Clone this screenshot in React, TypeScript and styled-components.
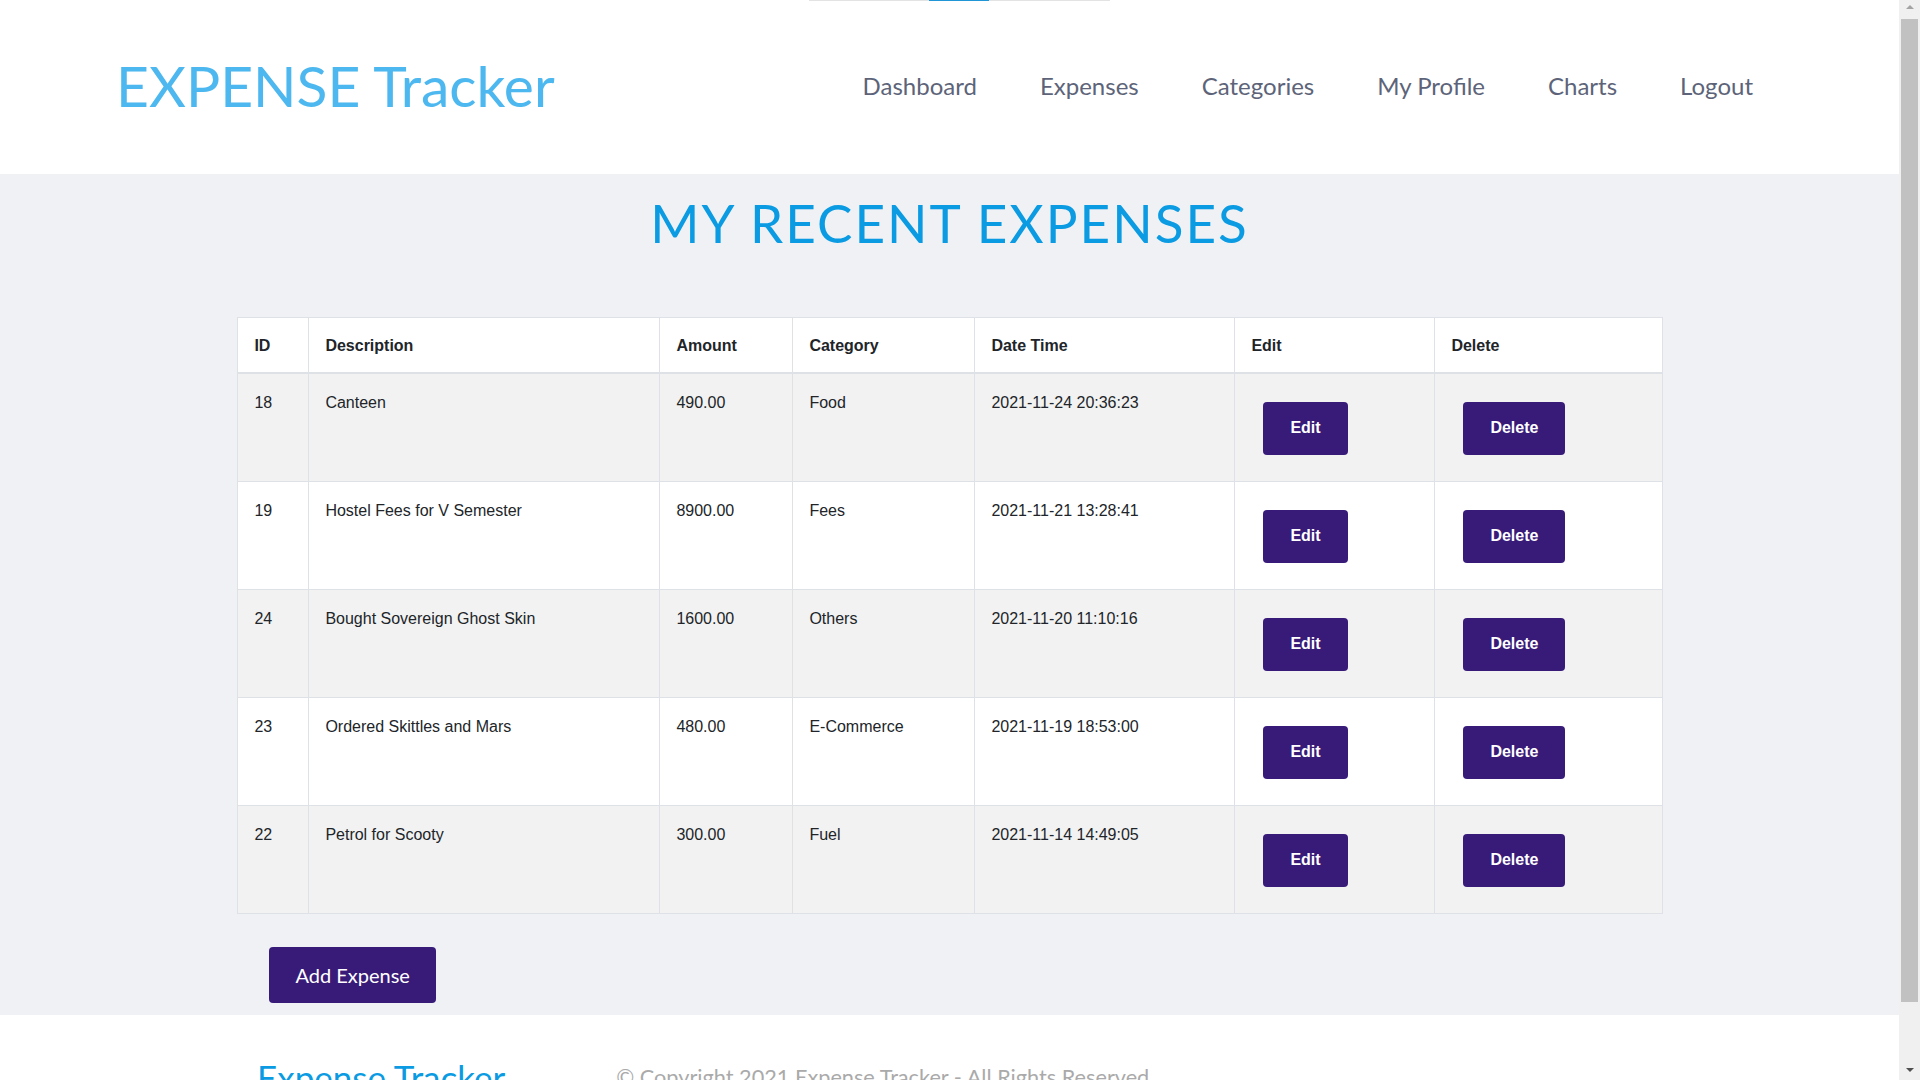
import React from 'react';
import styled, { createGlobalStyle } from 'styled-components';

interface Expense {
  id: number;
  description: string;
  amount: string;
  category: string;
  dateTime: string;
}

const expenses: Expense[] = [
  { id: 18, description: 'Canteen', amount: '490.00', category: 'Food', dateTime: '2021-11-24 20:36:23' },
  { id: 19, description: 'Hostel Fees for V Semester', amount: '8900.00', category: 'Fees', dateTime: '2021-11-21 13:28:41' },
  { id: 24, description: 'Bought Sovereign Ghost Skin', amount: '1600.00', category: 'Others', dateTime: '2021-11-20 11:10:16' },
  { id: 23, description: 'Ordered Skittles and Mars', amount: '480.00', category: 'E-Commerce', dateTime: '2021-11-19 18:53:00' },
  { id: 22, description: 'Petrol for Scooty', amount: '300.00', category: 'Fuel', dateTime: '2021-11-14 14:49:05' },
];

const navLinks = ['Dashboard', 'Expenses', 'Categories', 'My Profile', 'Charts', 'Logout'];

// column widths taken from the table borders
const columns = [
  { label: 'ID', width: 71 },
  { label: 'Description', width: 351 },
  { label: 'Amount', width: 133 },
  { label: 'Category', width: 182 },
  { label: 'Date Time', width: 260 },
  { label: 'Edit', width: 200 },
  { label: 'Delete', width: 228 },
];

const App: React.FC = () => {
  return (
    <>
      <GlobalStyle />
      <Page>
        <Header>
          <LoadBar>
            <LoadBarFill />
          </LoadBar>
          <Logo>EXPENSE Tracker</Logo>
          <Nav>
            {navLinks.map((link) => (
              <NavLink key={link} href="#">
                {link}
              </NavLink>
            ))}
          </Nav>
        </Header>

        <Main>
          <Title>MY RECENT EXPENSES</Title>
          <TableWrap>
            <Table>
              <colgroup>
                {columns.map((col) => (
                  <Col key={col.label} $width={col.width} />
                ))}
              </colgroup>
              <thead>
                <tr>
                  {columns.map((col) => (
                    <Th key={col.label}>{col.label}</Th>
                  ))}
                </tr>
              </thead>
              <tbody>
                {expenses.map((expense) => (
                  <Row key={expense.id}>
                    <Td>{expense.id}</Td>
                    <Td>{expense.description}</Td>
                    <Td>{expense.amount}</Td>
                    <Td>{expense.category}</Td>
                    <Td>{expense.dateTime}</Td>
                    <Td>
                      <ActionButton type="button">Edit</ActionButton>
                    </Td>
                    <Td>
                      <ActionButton type="button">Delete</ActionButton>
                    </Td>
                  </Row>
                ))}
              </tbody>
            </Table>
            <AddButton type="button">Add Expense</AddButton>
          </TableWrap>
        </Main>

        <Footer>
          <FooterBrand>Expense Tracker</FooterBrand>
          <Copyright>© Copyright 2021 Expense Tracker - All Rights Reserved</Copyright>
        </Footer>
      </Page>

      {/* browser scrollbar as seen in the screenshot */}
      <ScrollTrack>
        <ScrollArrow $dir="up" />
        <ScrollThumb />
        <ScrollArrow $dir="down" />
      </ScrollTrack>
    </>
  );
};

export default App;

const GlobalStyle = createGlobalStyle`
  *, *::before, *::after {
    box-sizing: border-box;
  }

  html {
    background: #ffffff;
    scrollbar-width: none;
  }

  html::-webkit-scrollbar {
    display: none;
  }

  body {
    margin: 0;
    font-family: Lato, "Open Sans", sans-serif;
    background: #ffffff;
  }
`;

const Page = styled.div`
  width: calc(100% - 21px);
`;

const Header = styled.header`
  position: relative;
  display: flex;
  align-items: center;
  justify-content: space-between;
  height: 174px;
  padding: 0 146px 4px 116px;
  background: #ffffff;
`;

const LoadBar = styled.div`
  position: absolute;
  top: 0;
  left: 809px;
  width: 301px;
  height: 1px;
  background: #e3e3e3;
`;

const LoadBarFill = styled.div`
  margin-left: 120px;
  width: 60px;
  height: 100%;
  background: #2196d6;
`;

const Logo = styled.div`
  font-family: Lato, sans-serif;
  font-size: 57px;
  font-weight: 400;
  color: #4db8ef;
  line-height: 1.2;
`;

const Nav = styled.nav`
  display: flex;
  align-items: center;
  gap: 63px;
`;

const NavLink = styled.a`
  font-family: Lato, sans-serif;
  font-size: 24px;
  color: #5d6479;
  text-decoration: none;
`;

const Main = styled.main`
  background: #f0f1f5;
  padding: 17px 0 12px;
`;

const Title = styled.h1`
  margin: 0 0 62px;
  text-align: center;
  font-family: Lato, sans-serif;
  font-size: 53px;
  font-weight: 400;
  line-height: 1.2;
  letter-spacing: 2px;
  color: #0a9be3;
`;

const TableWrap = styled.div`
  width: 75%;
  margin: 0 auto;
`;

const Table = styled.table`
  width: 100%;
  table-layout: fixed;
  border-collapse: collapse;
  background: #ffffff;
  border: 1px solid #dee2e6;
  font-family: "Liberation Sans", Arial, sans-serif;
  font-size: 16px;
  line-height: 24px;
  color: #212529;
`;

const Col = styled.col<{ $width: number }>`
  width: ${(props) => props.$width}px;
`;

const Th = styled.th`
  padding: 16px 16px 14px;
  text-align: left;
  font-weight: 700;
  border: 1px solid #dee2e6;
  border-bottom: 2px solid #dee2e6;
`;

const Row = styled.tr`
  &:nth-of-type(odd) {
    background: #f2f2f2;
  }
`;

const Td = styled.td`
  padding: 17px 16px 13px;
  vertical-align: top;
  border: 1px solid #dee2e6;
`;

const ActionButton = styled.button`
  display: inline-flex;
  align-items: center;
  vertical-align: top;
  height: 53px;
  margin: 11px 12px 13px;
  padding: 0 27px;
  border: none;
  border-radius: 4px;
  background: #381a79;
  color: #ffffff;
  font-family: "Liberation Sans", Arial, sans-serif;
  font-size: 16px;
  font-weight: 700;
  cursor: pointer;
`;

const AddButton = styled.button`
  display: block;
  height: 56px;
  margin: 33px 0 0 32px;
  padding: 0 26px;
  border: none;
  border-radius: 4px;
  background: #381a79;
  color: #ffffff;
  font-family: Lato, sans-serif;
  font-size: 20px;
  cursor: pointer;
`;

const Footer = styled.footer`
  display: flex;
  align-items: center;
  gap: 111px;
  padding: 41px 0 47px 257px;
  background: #ffffff;
`;

const FooterBrand = styled.div`
  font-family: Lato, sans-serif;
  font-size: 35px;
  line-height: 1.2;
  color: #0a9be3;
`;

const Copyright = styled.div`
  font-family: Lato, sans-serif;
  font-size: 21.7px;
  color: #aaaaaa;
`;

const ScrollTrack = styled.div`
  position: fixed;
  top: 0;
  right: 0;
  display: flex;
  flex-direction: column;
  align-items: center;
  width: 21px;
  height: 100vh;
  background: #f0f0f0;
`;

const ScrollArrow = styled.div<{ $dir: 'up' | 'down' }>`
  flex: 0 0 auto;
  width: 0;
  height: 0;
  margin: ${(props) => (props.$dir === 'up' ? '5px 0 10px' : 'auto 0 8px')};
  border-left: 4px solid transparent;
  border-right: 4px solid transparent;
  ${(props) =>
    props.$dir === 'up'
      ? 'border-bottom: 4px solid #a3a3a3;'
      : 'border-top: 4px solid #505050;'}
`;

const ScrollThumb = styled.div`
  width: 17px;
  height: 983px;
  background: #c1c1c1;
`;
